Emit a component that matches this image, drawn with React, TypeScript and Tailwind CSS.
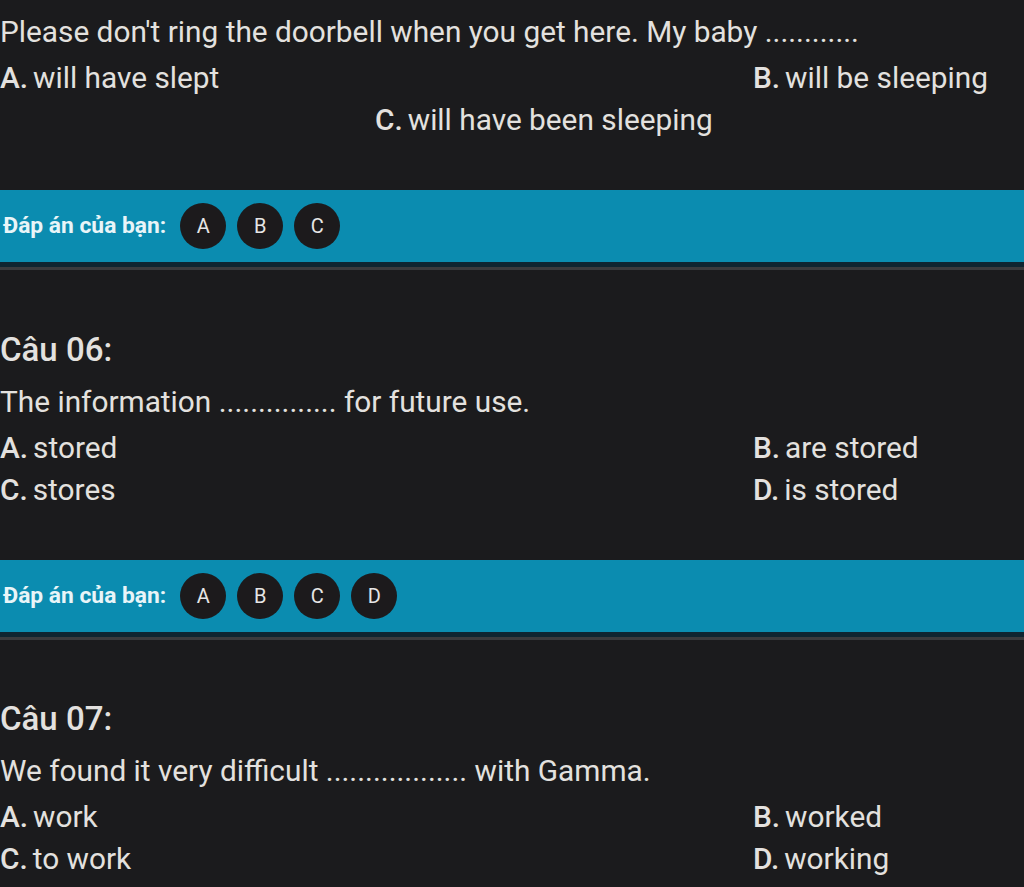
import React from "react";

type Opt = { key: string; text: string };

const FONT = { fontFamily: "Roboto, 'Noto Sans', sans-serif" };

function Option({ o }: { o: Opt }) {
  return (
    <div className="h-[42px] flex items-center whitespace-nowrap">
      <span className="font-medium">{o.key}.</span>
      <span className="ml-[5px]">{o.text}</span>
    </div>
  );
}

function AnswerBar({ letters }: { letters: string[] }) {
  return (
    <div>
      <div className="h-[72px] bg-[#0b8cb0] flex items-center pl-[3px]">
        <span className="text-[22.8px] font-bold text-[#e9f5f8] mr-[14px]">
          Đáp án của bạn:
        </span>
        <div className="flex gap-[11px]">
          {letters.map((l) => (
            <div
              key={l}
              className="w-[46px] h-[46px] rounded-full bg-[#1c1a1c] flex items-center justify-center text-[20px] text-[#e6e6e6]"
            >
              {l}
            </div>
          ))}
        </div>
      </div>
      <div className="h-[5px] bg-[#0f2430]" />
      <div className="h-[3px] bg-[#3a3a3d]" />
    </div>
  );
}

function Question({
  title,
  sentence,
  options,
}: {
  title: string;
  sentence: string;
  options: Opt[];
}) {
  return (
    <div>
      <div className="h-[44px] flex items-center text-[33px] font-medium mb-[9px]">
        {title}
      </div>
      <div className="h-[42px] flex items-center mb-[4px] whitespace-nowrap">
        {sentence}
      </div>
      <div className="grid grid-cols-[753px_1fr]">
        {options.map((o) => (
          <Option key={o.key} o={o} />
        ))}
      </div>
    </div>
  );
}

export default function App() {
  return (
    <div
      className="w-[1024px] h-[887px] overflow-hidden bg-[#1b1b1d] text-[#e3e1df] text-[29.8px]"
      style={FONT}
    >
      <div className="pt-[11px]">
        <div className="h-[42px] flex items-center mb-[4px] whitespace-nowrap">
          Please don't ring the doorbell when you get here. My baby ............
        </div>
        <div className="grid grid-cols-[753px_1fr]">
          <Option o={{ key: "A", text: "will have slept" }} />
          <Option o={{ key: "B", text: "will be sleeping" }} />
        </div>
        <div className="pl-[375px]">
          <Option o={{ key: "C", text: "will have been sleeping" }} />
        </div>
      </div>

      <div className="mt-[49px]">
        <AnswerBar letters={["A", "B", "C"]} />
      </div>

      <div className="mt-[58px]">
        <Question
          title="Câu 06:"
          sentence="The information ............... for future use."
          options={[
            { key: "A", text: "stored" },
            { key: "B", text: "are stored" },
            { key: "C", text: "stores" },
            { key: "D", text: "is stored" },
          ]}
        />
      </div>

      <div className="mt-[49px]">
        <AnswerBar letters={["A", "B", "C", "D"]} />
      </div>

      <div className="mt-[57px]">
        <Question
          title="Câu 07:"
          sentence="We found it very difficult .................. with Gamma."
          options={[
            { key: "A", text: "work" },
            { key: "B", text: "worked" },
            { key: "C", text: "to work" },
            { key: "D", text: "working" },
          ]}
        />
      </div>
    </div>
  );
}
